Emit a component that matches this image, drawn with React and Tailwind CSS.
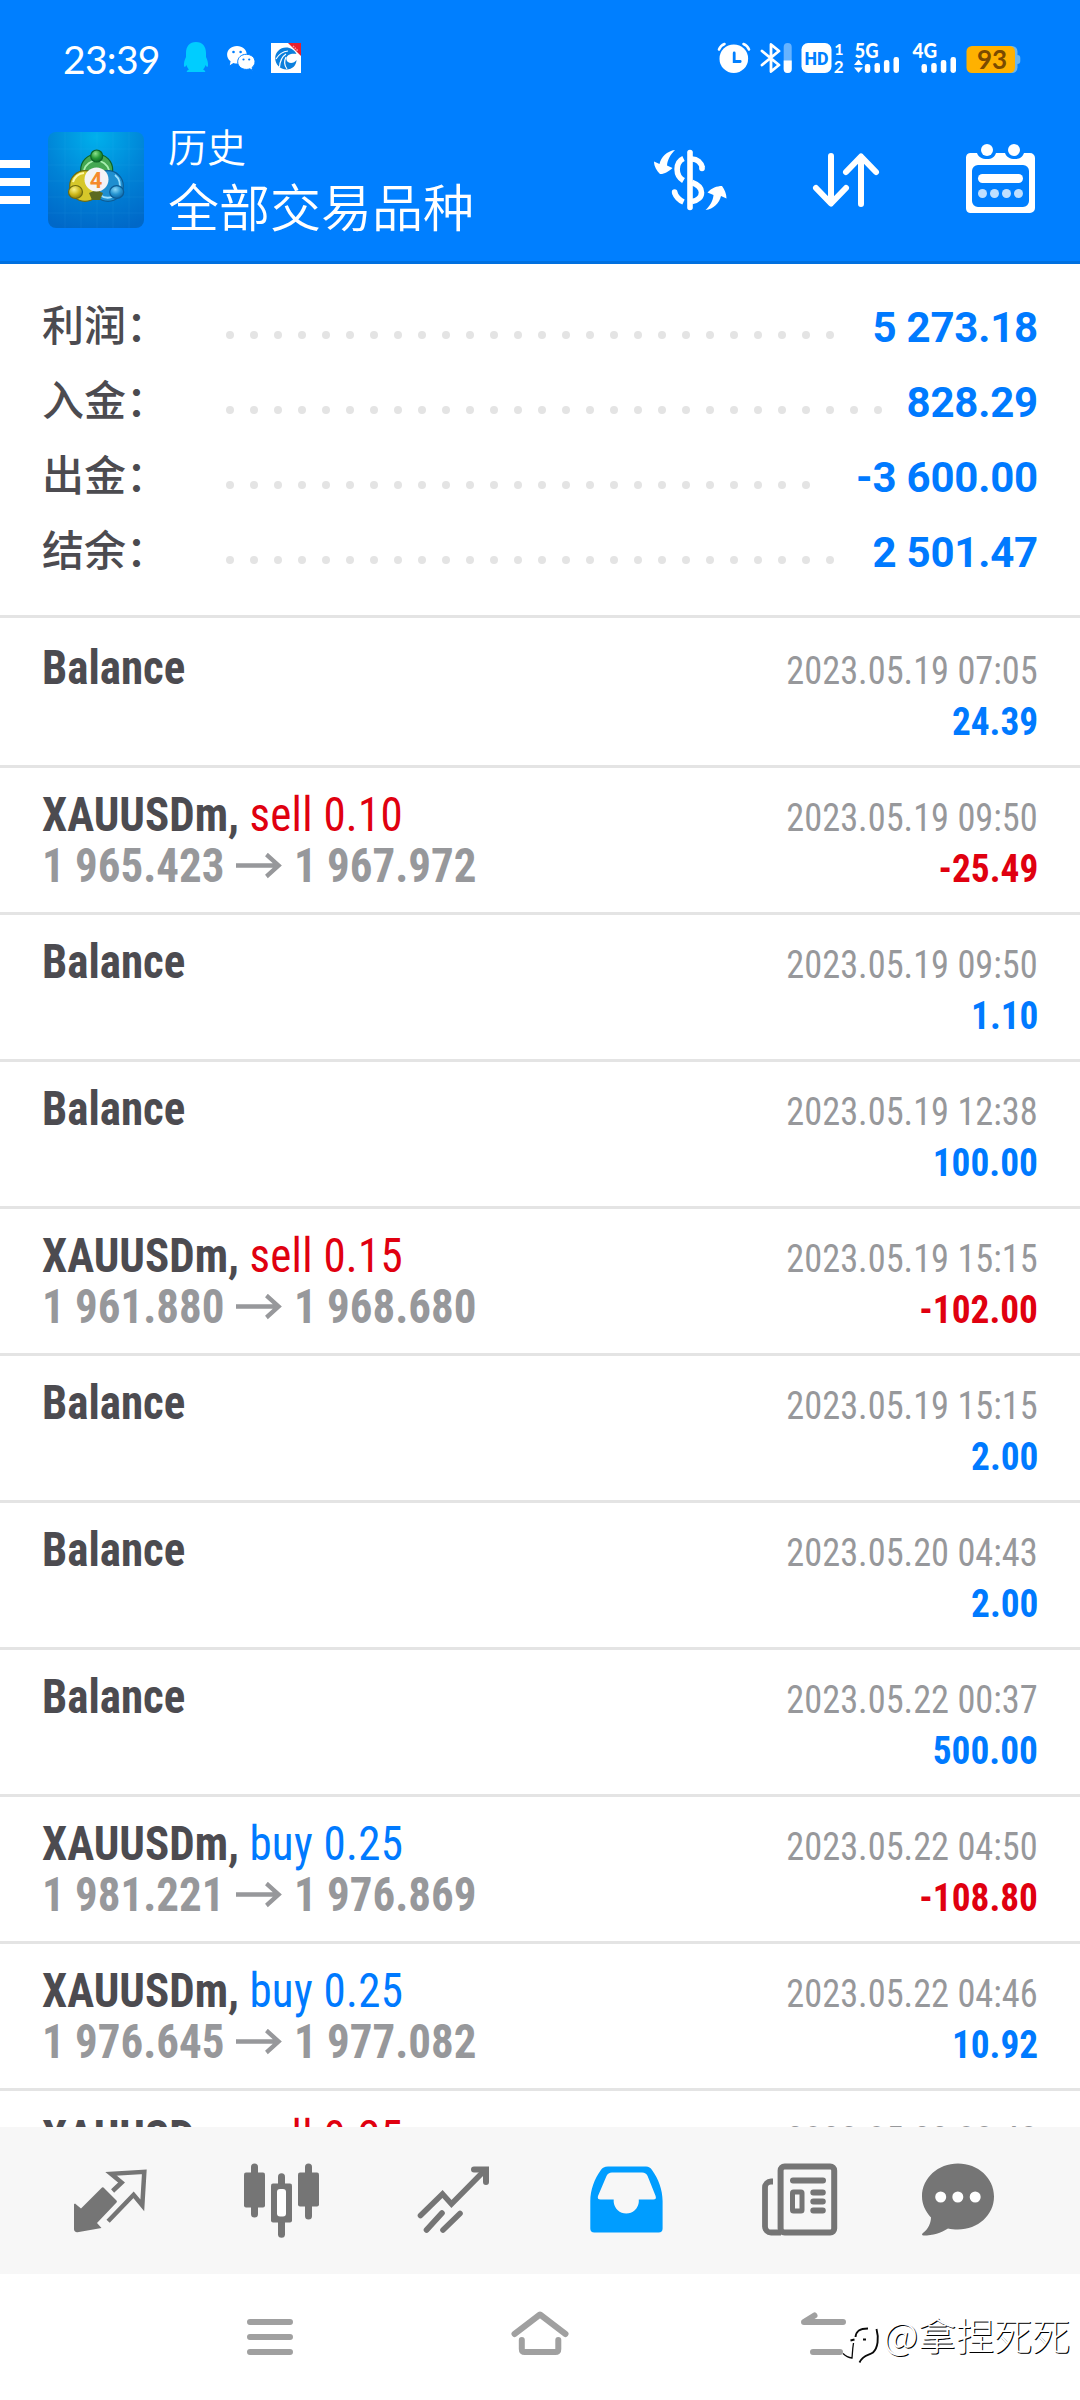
import React from 'react';

const summary = [
    { label: '利润：', value: '5 273.18', dots: 26 },
    { label: '入金：', value: '828.29', dots: 28 },
    { label: '出金：', value: '-3 600.00', dots: 25 },
    { label: '结余：', value: '2 501.47', dots: 26 },
];

const history = [
    { time: '2023.05.19 07:05', amount: '24.39' },
    { side: 'sell', lots: '0.10', from: '1 965.423', to: '1 967.972', time: '2023.05.19 09:50', amount: '-25.49' },
    { time: '2023.05.19 09:50', amount: '1.10' },
    { time: '2023.05.19 12:38', amount: '100.00' },
    { side: 'sell', lots: '0.15', from: '1 961.880', to: '1 968.680', time: '2023.05.19 15:15', amount: '-102.00' },
    { time: '2023.05.19 15:15', amount: '2.00' },
    { time: '2023.05.20 04:43', amount: '2.00' },
    { time: '2023.05.22 00:37', amount: '500.00' },
    { side: 'buy', lots: '0.25', from: '1 981.221', to: '1 976.869', time: '2023.05.22 04:50', amount: '-108.80' },
    { side: 'buy', lots: '0.25', from: '1 976.645', to: '1 977.082', time: '2023.05.22 04:46', amount: '10.92' },
    { side: 'sell', lots: '0.25', time: '2023.05.22 08:48' },
];

const StatusBar = () => (
    <div className="flex h-[114px] items-start pt-[38px] pl-[63px] pr-[58px]">
        <span className="-mt-px w-[120px] font-['Lato'] text-[39px] leading-[44px] tracking-[-0.7px]">23:39</span>

        {/* QQ */}
        <svg className="h-10 w-[26px]" viewBox="183 38 26 40" fill="#00cdff">
            <path d="M196 42c6.500 0 10 4.500 10 11v4c1.500 3 2.300 6 2 9-.2 1.500-1.500 1-2.500-1-.5 2-1.300 3.300-2.400 4.500 1.200.5 2.200 1.200 2.200 2.500h-18.600c0-1.300 1-2 2.200-2.500-1.100-1.200-1.900-2.500-2.400-4.500-1 2-2.300 2.500-2.500 1-.3-3 .5-6 2-9v-4c0-6.500 3.500-11 10-11z" />
        </svg>

        {/* WeChat */}
        <svg className="ml-[18px] h-10 w-[29px]" viewBox="227 38 29 40">
            <path d="M237 46c5.600 0 9.800 3.700 9.800 8.700S242.600 63.500 237 63.500c-1.300 0-2.500-.2-3.600-.6l-3.600 2.300.8-4c-2.300-1.700-3.500-3.900-3.500-6.500 0-5 4.300-8.700 9.900-8.700z" fill="#fff" />
            <path d="M246.300 54.300c4.900 0 8.700 3.200 8.700 7.500 0 2.300-1.100 4.200-2.900 5.600l.6 3-2.900-1.600c-1 .4-2.200.6-3.500.6-4.900 0-8.600-3.300-8.600-7.600s3.700-7.500 8.600-7.500z" fill="#fff" stroke="#007fff" strokeWidth="1" />
            <g fill="#007fff"><circle cx="233.500" cy="52" r="1.300" /><circle cx="240.600" cy="52" r="1.300" /><circle cx="243.500" cy="59.500" r="1.100" /><circle cx="249.200" cy="59.500" r="1.100" /></g>
        </svg>

        {/* Broker app */}
        <svg className="ml-[15px] h-10 w-[30px]" viewBox="271 38 30 40">
            <path d="M271 43h30v30h-30z" fill="#fff" />
            <path d="M296.500 54c-2-4-6-6.500-10.500-6.500-6 0-10.800 4.800-10.800 10.800S280 69.500 286.500 69.500c6 0 10-4.500 10-9.500-2 3-6 4-8.500 2s-2-5.500.5-7 5.500-1.500 8-1z" fill="#0b7fdc" />
            <path d="M276 59c3-5 6-7.500 12-8M279.500 67c.5-6 2-10 6.500-13M287 69c-3-4-3-8-1-12" stroke="#fff" strokeWidth="1.200" fill="none" />
            <path d="M288 43h13v13z" fill="#e6202e" />
            <path d="M293 46l5 5" stroke="#ff9aa0" strokeWidth="1.500" strokeDasharray="1.500 1" />
        </svg>

        <div className="ml-auto flex">
            {/* Alarm */}
            <svg className="h-10 w-[34px]" viewBox="716.500 38 34 40" fill="none" stroke="#fff">
                <circle cx="733.300" cy="58.700" r="14.300" fill="#fff" stroke="none" />
                <path d="M718.500 49.500q1.500-4 5.500-5.500M748.500 49.500q-1.500-4-5.500-5.500" strokeWidth="2.600" strokeLinecap="round" />
                <path d="M733.700 53v8.500h6" stroke="#007fff" strokeWidth="2.800" strokeLinecap="round" />
            </svg>
            {/* Bluetooth */}
            <svg className="ml-[9px] h-10 w-[33px]" viewBox="759.500 38 33 40" fill="none">
                <path d="M761.500 51l17 14-8 6.500v-27l8 6.500-17 14" stroke="#fff" strokeWidth="2.800" strokeLinejoin="round" strokeLinecap="round" />
                <rect x="783.200" y="43" width="8" height="30" rx="4" fill="#66b3ff" />
                <path d="M783.200 60.500h8V69a4 4 0 0 1-8 0z" fill="#fff" />
            </svg>
            {/* HD */}
            <svg className="ml-[8px] h-10 w-[44px]" viewBox="800.500 38 44 40">
                <rect x="801" y="43" width="30" height="30" rx="6.500" fill="#fff" />
                <text x="804" y="65" fontFamily="Roboto" fontWeight="800" fontSize="19" fill="#007fff" textLength="24" lengthAdjust="spacingAndGlyphs">HD</text>
                <text x="838.500" y="54.500" textAnchor="middle" fontFamily="Lato" fontWeight="700" fontSize="16" fill="#fff">1</text>
                <text x="838.300" y="72.500" textAnchor="middle" fontFamily="Lato" fontWeight="700" fontSize="17" fill="#fff">2</text>
            </svg>
            {/* 5G */}
            <svg className="ml-[8px] h-10 w-[47px]" viewBox="852.500 38 47 40" fill="#fff">
                <text x="854" y="57.500" fontFamily="Lato" fontWeight="900" fontSize="20" textLength="24" lengthAdjust="spacingAndGlyphs">5G</text>
                <path d="M858 59.500l4.500 5.500h-9zM858 72.800l4.500-5.300h-9z" />
                <rect x="864.300" y="64" width="5.500" height="9" rx="2.400" /><rect x="874" y="63" width="5.500" height="10" rx="2.400" />
                <rect x="883.400" y="60" width="5.500" height="13" rx="2.400" /><rect x="893" y="57" width="5.500" height="16" rx="2.400" />
            </svg>
            {/* 4G */}
            <svg className="ml-[11px] h-10 w-[47px]" viewBox="910.500 38 47 40" fill="#fff">
                <text x="912" y="57.500" fontFamily="Lato" fontWeight="900" fontSize="20" textLength="24.500" lengthAdjust="spacingAndGlyphs">4G</text>
                <rect x="921" y="64" width="5.500" height="9" rx="2.400" /><rect x="930.700" y="63" width="5.500" height="10" rx="2.400" />
                <rect x="940.300" y="60" width="5.500" height="13" rx="2.400" /><rect x="950" y="57" width="5.500" height="16" rx="2.400" />
            </svg>
            {/* Battery */}
            <svg className="ml-[8px] h-10 w-[56px]" viewBox="965.500 38 56 40">
                <rect x="968" y="46" width="49" height="27" rx="5.500" fill="#6ab6ef" />
                <rect x="1014" y="55" width="5.800" height="9" rx="3" fill="#6ab6ef" />
                <rect x="966" y="46" width="48.500" height="27" rx="5.500" fill="#ffb100" />
                <text x="991.500" y="69" textAnchor="middle" fontFamily="Lato" fontWeight="700" fontSize="26" fill="#7a4a00">93</text>
            </svg>
        </div>
    </div>
);

const AppLogo = () => (
    <svg className="ml-[18px] size-24" viewBox="0 0 96 96">
        <defs>
            <radialGradient id="tile" cx="0.5" cy="0.05" r="1">
                <stop offset="0" stopColor="#00b0ec" />
                <stop offset="0.55" stopColor="#0082d6" />
                <stop offset="1" stopColor="#0068c8" />
            </radialGradient>
            <radialGradient id="green" cx="0.4" cy="0.3" r="0.8"><stop offset="0" stopColor="#8be08b" /><stop offset="0.5" stopColor="#259a38" /><stop offset="1" stopColor="#0b5c22" /></radialGradient>
            <radialGradient id="yellow" cx="0.4" cy="0.3" r="0.8"><stop offset="0" stopColor="#fbf48a" /><stop offset="0.5" stopColor="#cdb81c" /><stop offset="1" stopColor="#7c7208" /></radialGradient>
            <radialGradient id="blue" cx="0.4" cy="0.3" r="0.8"><stop offset="0" stopColor="#8bd8f8" /><stop offset="0.5" stopColor="#2493d0" /><stop offset="1" stopColor="#0a5a9c" /></radialGradient>
        </defs>
        <rect width="96" height="96" rx="8" fill="url(#tile)" />
        <path d="M0 17h96M0 33h96M0 49h96M0 65h96M0 81h96M17 0v96M33 0v96M49 0v96M65 0v96M81 0v96" stroke="#5ac8ff" strokeOpacity="0.08" />
        <g strokeWidth="1.200">
            <circle cx="48.700" cy="38" r="16" fill="#46a853" stroke="#0d6426" />
            <path d="M36 38a13 13 0 0 1 25 0" stroke="#a9efb0" fill="none" strokeWidth="1.800" />
            <circle cx="60" cy="54" r="15.300" fill="#1f8fd0" stroke="#0c5c96" />
            <path d="M67 43a13 13 0 0 1 4 15M52 63a13 13 0 0 0 14 1" stroke="#9be0ff" fill="none" strokeWidth="1.800" />
            <circle cx="37" cy="54" r="15.300" fill="#d6c72a" stroke="#6e6a10" />
            <path d="M25 50a13 13 0 0 1 11-9" stroke="#fff8a8" fill="none" strokeWidth="2" />
            <path d="M41 61l7-3 7 3-3 7h-8z" fill="#5c6a20" stroke="none" />
            <circle cx="48.700" cy="24" r="6" fill="url(#green)" stroke="#0d6426" />
            <ellipse cx="27.500" cy="60" rx="7" ry="6.500" fill="url(#yellow)" stroke="#6e6a10" />
            <ellipse cx="68.700" cy="60" rx="7" ry="6.300" fill="url(#blue)" stroke="#0c5c96" />
        </g>
        <circle cx="48.500" cy="47.500" r="12" fill="#f3f3f6" />
        <text x="48" y="55.500" textAnchor="middle" fontFamily="Roboto" fontWeight="700" fontSize="22" fill="#f58a2c">4</text>
    </svg>
);

const Toolbar = () => (
    <div className="flex h-[147px] items-start pt-[18px]">
        <div className="mt-[28px] flex w-[30px] flex-col gap-[10px]">
            <div className="h-2 bg-white" />
            <div className="h-2 bg-white" />
            <div className="h-2 bg-white" />
        </div>
        <AppLogo />
        <div className="-mt-[12px] ml-6 flex flex-col font-['Noto_Sans_CJK_SC',sans-serif] font-[350]">
            <span className="h-[51px] text-[39px] leading-[51px]">历史</span>
            <span className="h-[68px] text-[51px] leading-[68px]">全部交易品种</span>
        </div>

        <svg className="mt-[12px] ml-auto h-[72px] w-[76px]" viewBox="652 144 76 72" fill="none" stroke="#fff">
            <path d="M690 152.500v55" strokeWidth="5.600" strokeLinecap="round" />
            <path d="M683.500 158.500c-8.500 4-8.500 17 0 22M674.500 192.500c1.500 4 4.500 7.500 9 9.500" strokeWidth="5.600" />
            <path d="M692 159c5 0 9 3.500 10.500 9M692 182.500c5.500 2 9.500 5 9.500 10 0 4.500-3.500 8-9.500 9" strokeWidth="5.600" />
            <circle cx="702" cy="168.500" r="2.800" fill="#fff" stroke="none" />
            <circle cx="674.600" cy="192" r="2.800" fill="#fff" stroke="none" />
            <path d="M675 150c-8 1-14 7-15.500 14l-5.500-2.500c0 5 3 9.500 6 12.500 4 .3 9-2.500 12.500-6l-5.500-2.500c.5-6 3.500-11 8-15.500z" fill="#fff" stroke="none" />
            <path d="M705.500 210c8-1 14-7 15.500-14l5.500 2.500c0-5-2-9-4.500-12.500-5 0-10.500 2-14.500 6.500l6 2.500c-.5 6-3.500 11-8 15z" fill="#fff" stroke="none" />
        </svg>
        <svg className="mt-[15px] ml-[82px] h-[66px] w-[72px]" viewBox="810 147 72 66" fill="none" stroke="#fff" strokeWidth="6" strokeLinecap="round" strokeLinejoin="round">
            <path d="M831 156v47M816 188l15 15.500 15-15.500M861 204v-47M846 172l15-15.500L876 172" />
        </svg>
        <svg className="mt-[9px] mr-[42px] ml-[81px] h-[76px] w-[75px]" viewBox="963 141 75 76">
            <path fillRule="evenodd" fill="#fff" d="M970 153h7c1.500 4 5 6 10 6s7.500-2 9-6h9c1.500 4 5 6 10 6s7.500-2 9-6h6a5 5 0 0 1 5 5v50a5 5 0 0 1-5 5h-60a5 5 0 0 1-4-5v-50a5 5 0 0 1 4-5zm8 12a6 6 0 0 0-6 6v30a6 6 0 0 0 6 6h45a6 6 0 0 0 6-6v-30a6 6 0 0 0-6-6z" />
            <circle cx="987" cy="150" r="6" fill="#fff" /><circle cx="1014" cy="150" r="6" fill="#fff" />
            <rect x="978" y="174" width="45" height="9" rx="4.500" fill="#fff" />
            <g fill="#bfdfff"><circle cx="982.500" cy="193.500" r="4.500" /><circle cx="994.500" cy="193.500" r="4.500" /><circle cx="1006.500" cy="193.500" r="4.500" /><circle cx="1018.500" cy="193.500" r="4.500" /></g>
        </svg>
    </div>
);

const SummaryRow = ({ label, value, dots }) => (
    <div className="flex h-[75px] items-start justify-between pr-[42px] pl-[42px]">
        <span className="w-[184px] pt-[5px] font-['Noto_Sans_CJK_SC',sans-serif] text-[42px] leading-[60px] font-medium text-[#4c4b50]">{label}</span>
        <div className="mr-auto flex gap-4 pt-[43px]">
            {Array.from({ length: dots }, (_, i) => (
                <i key={i} className="size-2 rounded-full bg-[#e4e4e4]" />
            ))}
        </div>
        <span className="pt-[15px] font-['Roboto'] text-[42px] leading-[50px] font-bold tracking-[-0.2px] text-[#007aff]">{value}</span>
    </div>
);

const HistoryRow = ({ side, lots, from, to, time, amount = '' }) => (
    <div className="flex h-[147px] shrink-0 justify-between border-b-[3px] border-[#e4e4e4] px-[42px] font-['Roboto'] [font-stretch:75%]">
        <div className="origin-left scale-x-[0.937] pt-[21px] text-[48px] leading-[51px] font-bold whitespace-nowrap">
            <div className="text-[#4c4b50]">
                {side ? 'XAUUSDm, ' : 'Balance'}
                {side && <span className={side === 'buy' ? 'font-normal tracking-[0.3px] text-[#007aff]' : 'font-normal tracking-[0.3px] text-[#e0000f]'}>{side} {lots}</span>}
            </div>
            {from && (
                <div className="flex items-center text-[#97989b]">
                    <span>{from}</span>
                    <svg className="mx-[12px] h-[26px] w-[50px]" viewBox="0 0 50 26" fill="none" stroke="#97989b" strokeWidth="4.500">
                        <path d="M0 12.500h46M32.500 1.500l13 11-13 11" />
                    </svg>
                    <span>{to}</span>
                </div>
            )}
        </div>
        <div className="flex flex-col items-end pt-[25px] text-[39px] leading-[51px]">
            <span className="origin-right scale-x-[0.932] text-[#97989b]">{time}</span>
            <span className={amount.startsWith('-') ? 'origin-right scale-x-[0.957] font-bold text-[#e0000f]' : 'origin-right scale-x-[0.957] font-bold text-[#007aff]'}>{amount}</span>
        </div>
    </div>
);

const tabs = [
    // quotes
    { box: '68 2158.500 84 84', art: (
        <>
            <path d="M75 2203l6 5 20.500-20.500a1.500 1.500 0 0 1 2.500 0l12.500 12.500a1.500 1.500 0 0 1 0 2L97 2222.500l4.500 5-24 4.300a3 3 0 0 1-3.500-3v-25z" fill="#757575" />
            <path d="M112.600 2190.500l9-8.500-10.500-8.700 33.200-2-2 33.500-8.700-10.500-25.500 26.500" fill="none" stroke="#757575" strokeWidth="4.500" />
        </>
    ) },
    // charts
    { box: '240 2158.500 84 84', art: (
        <g fill="#757575">
            <rect x="244" y="2172" width="21" height="35" rx="2" /><rect x="251" y="2163" width="7" height="54" rx="3.500" />
            <rect x="278" y="2172.700" width="7" height="64.500" rx="3.500" /><rect x="271" y="2183" width="21" height="39" rx="2" />
            <rect x="277" y="2188.500" width="9" height="27.500" rx="3" fill="#fff" />
            <rect x="298" y="2172" width="21" height="34" rx="2" /><rect x="305" y="2163" width="7" height="56" rx="3.500" />
        </g>
    ) },
    // trade
    { box: '412 2158.500 84 84', art: (
        <g fill="none" stroke="#757575" strokeWidth="5.600" strokeLinecap="round">
            <path d="M420.500 2215l22-21.500 9 10 33.500-34" />
            <path d="M474 2169h12v12.500" strokeWidth="6" />
            <path d="M426.500 2229.500l15.500-17M443 2229.500l17-16.500" />
        </g>
    ) },
    // history
    { box: '584 2158.500 84 84', art: (
        <path fillRule="evenodd" fill="#009dff" d="M608 2166h38q4 0 6 3.500c6.500 9 10.600 20 10.600 31V2228a4 4 0 0 1-4 4h-64.300a4 4 0 0 1-4-4v-27.500c0-11 4.100-22 10.600-31q2-3.500 7.100-3.500zm4 6q-4 0-5.500 3.500l-8.500 20q-1 3.500 2.500 3.500h13.200v2.500a12.600 12.600 0 0 0 25.100 0V2199h14.500q3.500 0 2.300-3.500l-8-20q-1.500-3.500-5.500-3.500z" />
    ) },
    // news
    { box: '756 2158.500 84 84', art: (
        <g fill="none" stroke="#757575" strokeWidth="6">
            <rect x="780.600" y="2166" width="53.600" height="66" rx="4" />
            <path d="M773 2181h-2a6 6 0 0 0-6 6v39a6 6 0 0 0 6 6h10" strokeWidth="5.800" />
            <path d="M793 2180h30M813.300 2192h9.500M813.300 2201h9.500M813.300 2210h9.500" strokeLinecap="round" />
            <rect x="792.500" y="2191.500" width="9.500" height="19" rx="1" strokeWidth="5" />
        </g>
    ) },
    // messages
    { box: '916 2158.500 84 84', art: (
        <>
            <path d="M958 2163c20 0 36 14.500 36 33s-16 33-36 33c-4 0-7-.3-10-1-7 4.500-15 7-24.500 7-1.500 0-2-1.300-.8-2.300 6-4.500 8-10 8.300-15.700-5.500-6-9-13-9-21 0-18.500 16-33 36-33z" fill="#757575" />
            <g fill="#fff"><circle cx="940.700" cy="2196.500" r="5.500" /><circle cx="957.800" cy="2196.500" r="5.500" /><circle cx="975.200" cy="2196.500" r="5.500" /></g>
        </>
    ) },
];

const TabBar = () => (
    <div className="flex h-[147px] items-center bg-[#f7f7f7] px-6">
        {tabs.map((tab, i) => (
            <div key={tab.box} className={i === 5 ? 'flex w-[172px] shrink-0 justify-center pr-6' : 'flex w-[172px] shrink-0 justify-center'}>
                <svg className="size-[84px]" viewBox={tab.box}>{tab.art}</svg>
            </div>
        ))}
    </div>
);

const SystemNav = () => (
    <div className="relative flex h-[126px] items-start bg-white pt-[33px] pl-[240px]">
        <svg className="h-[60px] w-[60px]" viewBox="240 2307 60 60" stroke="#a0a0a0" strokeWidth="6" strokeLinecap="round">
            <path d="M250 2322h40M250 2337h40M250 2352h40" />
        </svg>
        <svg className="ml-[205px] h-[60px] w-[70px]" viewBox="505 2307 70 60" fill="none" stroke="#a0a0a0" strokeWidth="6" strokeLinecap="round">
            <path d="M514.500 2334l25.500-19.500 25.500 19.500" strokeLinejoin="round" />
            <path d="M521.800 2340v9q0 3 3 3h30.500q3 0 3-3v-9" />
        </svg>
        <svg className="ml-[225px] h-[60px] w-[70px]" viewBox="800 2307 70 60" fill="none" stroke="#a0a0a0" strokeWidth="6" strokeLinecap="round" strokeLinejoin="round">
            <path d="M843 2322h-39l10.500-6.500M813 2352h27" />
        </svg>
        {/* author mark over the system keys */}
        <div className="absolute top-[32px] right-[10px] flex items-start text-white">
            <svg className="mt-[16px] h-[44px] w-[42px]" viewBox="840 2322 42 44" fill="none">
                <path d="M846 2351c5-4 3-12 8-19 4-4 8-4 12-3M848 2337h8M873 2327c3 8 2 18-2 23-3 3-9 3-13 10" stroke="#fff" strokeWidth="6" />
                <path d="M854.500 2337c.5-5 3-8.500 12.500-8.500M849.500 2340.500l4-1M862 2339.500h3M875.500 2329c2.500 9 1.500 19-3.500 23.500-4 3-10 2-13.500 10" stroke="#0a0a0a" strokeWidth="1.900" />
                <path d="M842 2353.500q4 4 9 4.500c.5-5 .5-9 1.500-15" stroke="#0a0a0a" strokeWidth="1.300" />
            </svg>
            <span className="mt-1 font-['Noto_Sans_CJK_SC',sans-serif] text-[38px] leading-[48px] font-light [text-shadow:1px_1px_0.5px_#000]">@拿捏死死</span>
        </div>
    </div>
);

export default function App() {
    return (
        <div className="flex h-[2400px] w-[1080px] flex-col overflow-hidden bg-white">
            <header className="h-[264px] border-b-[3px] border-[#0070e0] bg-[#007fff] text-white">
                <StatusBar />
                <Toolbar />
            </header>
            <section className="h-[354px] border-b-[3px] border-[#e4e4e4] pt-[24px]">
                {summary.map((row) => <SummaryRow key={row.label} {...row} />)}
            </section>
            <main className="flex h-[1509px] flex-col overflow-hidden pt-[3px]">
                {history.map((row, i) => <HistoryRow key={i} {...row} />)}
            </main>
            <TabBar />
            <SystemNav />
        </div>
    );
}
